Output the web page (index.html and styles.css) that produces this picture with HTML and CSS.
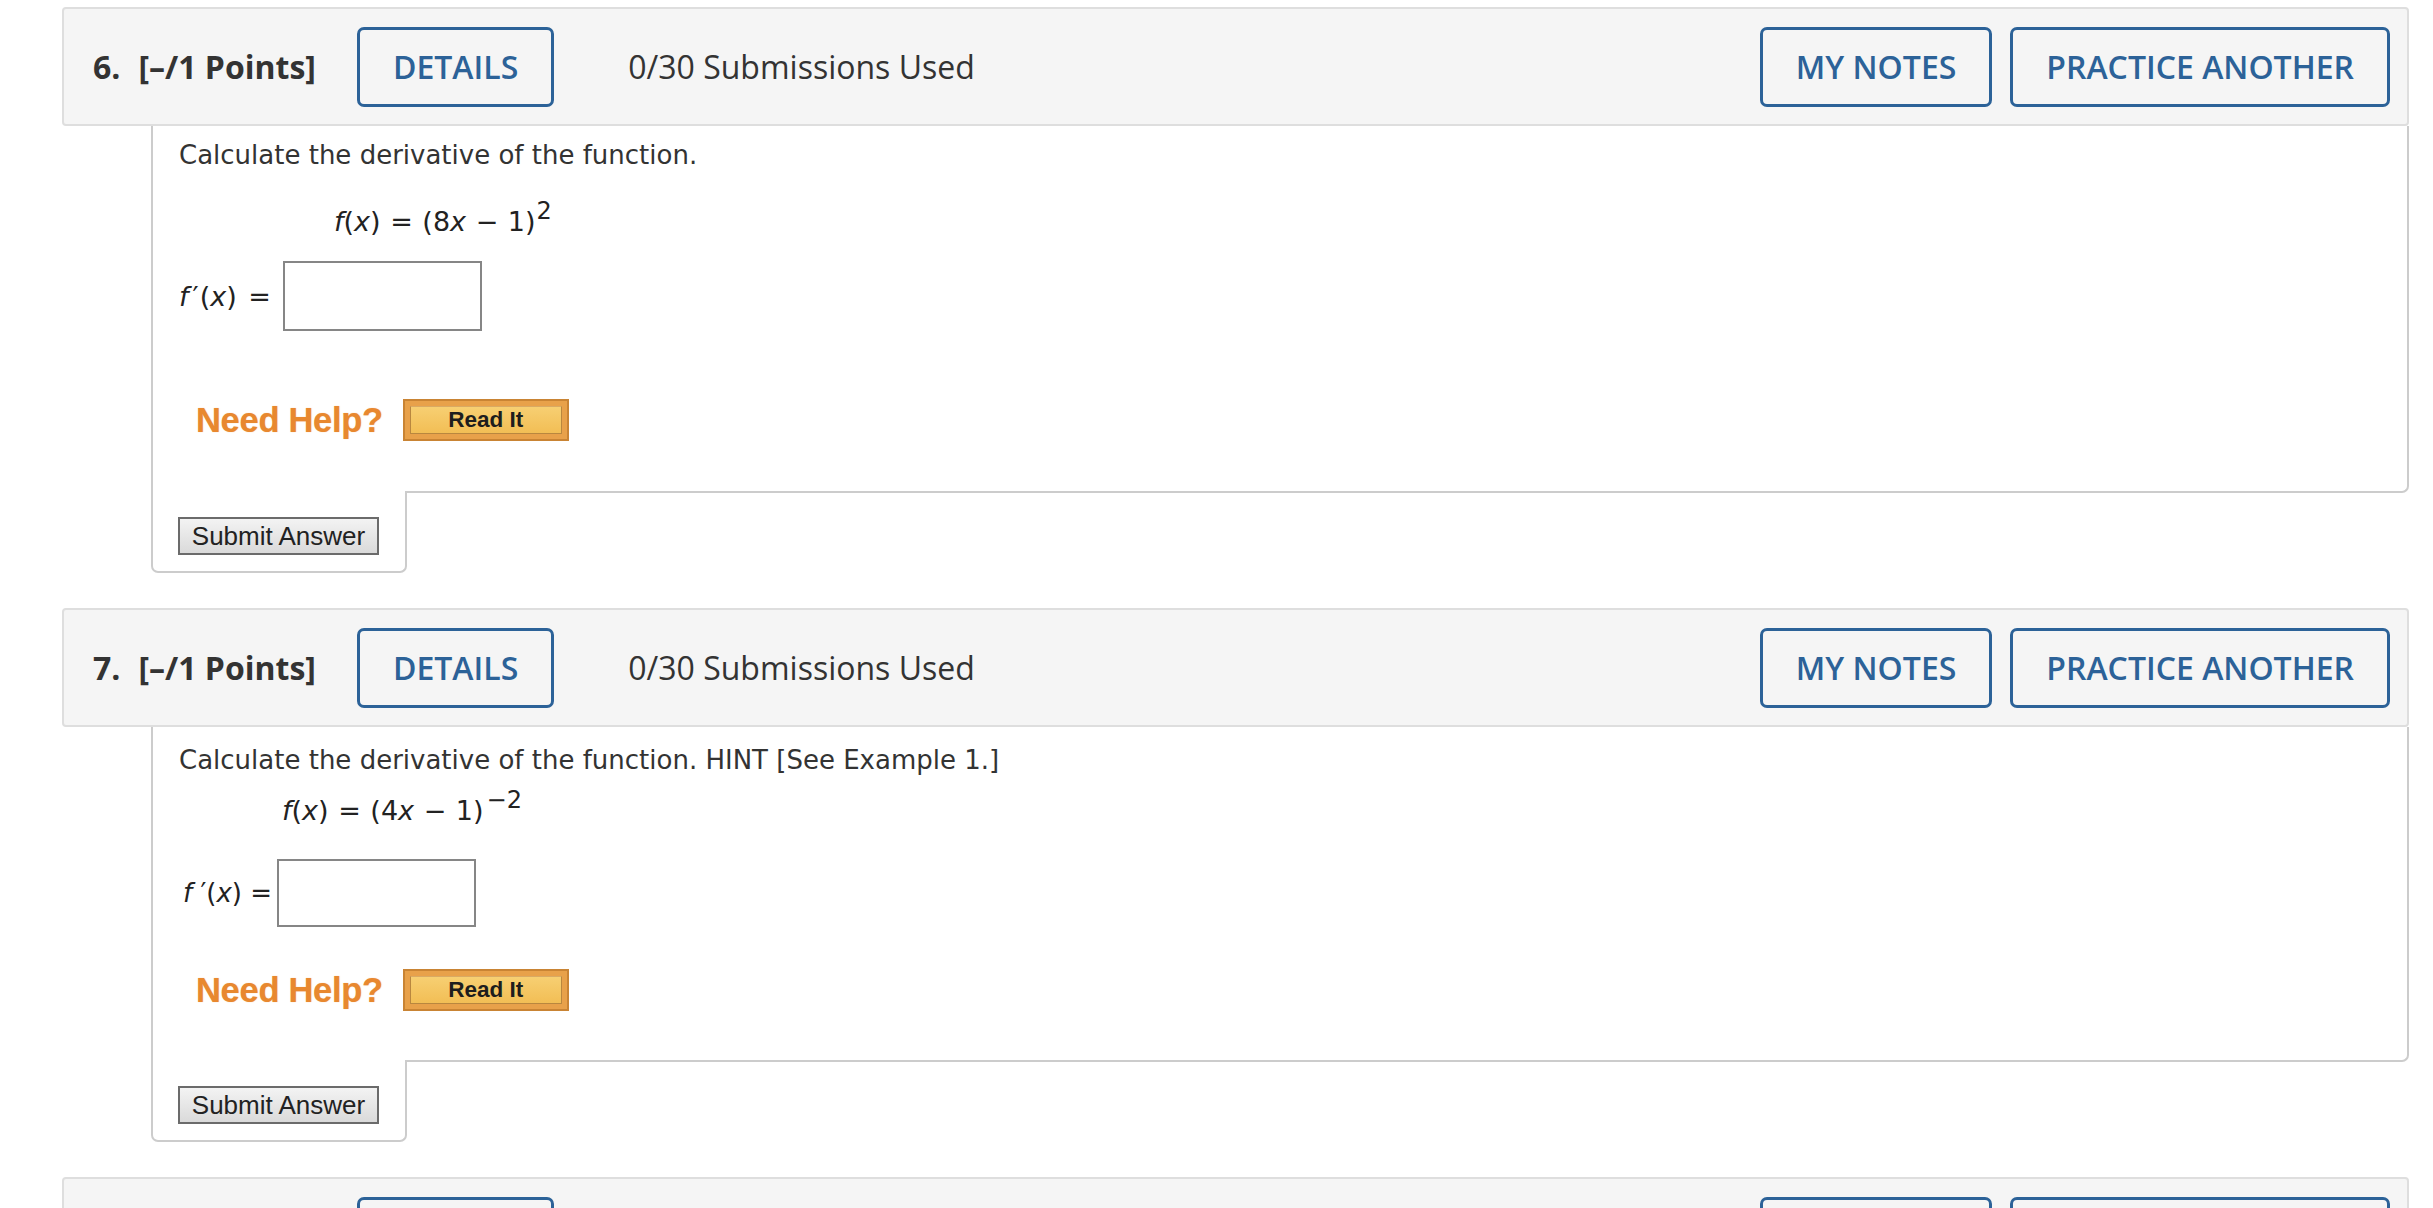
FILE: index.html
```html
<!DOCTYPE html>
<html lang="en">
<head>
<meta charset="utf-8">
<title>Questions</title>
<link rel="stylesheet" href="styles.css">
</head>
<body>
<div class="page">

  <section class="question">
    <div class="q-head">
      <span class="q-num"><span class="q-n">6.</span>[–/1 Points]</span>
      <span class="hbtn hbtn-details">DETAILS</span>
      <span class="q-subs">0/30 Submissions Used</span>
      <span class="q-spacer"></span>
      <span class="hbtn">MY NOTES</span>
      <span class="hbtn hbtn-practice">PRACTICE ANOTHER</span>
    </div>
    <div class="q-body">
      <div class="q-content q6">
        <p class="q-text">Calculate the derivative of the function.</p>
        <div class="q-formula"><i>f</i>(<i>x</i>) = (8<i>x</i> − 1)<span class="sup">2</span></div>
        <div class="q-answer"><span class="q-label"><i>f</i><span class="prime">′</span>(<i>x</i>) =</span><span class="q-input"></span></div>
        <div class="q-help"><span class="need-help">Need Help?</span><span class="read-it"><span class="read-it-in">Read It</span></span></div>
      </div>
      <div class="q-submit"><span class="submit-btn">Submit Answer</span></div>
    </div>
  </section>

  <section class="question">
    <div class="q-head">
      <span class="q-num"><span class="q-n">7.</span>[–/1 Points]</span>
      <span class="hbtn hbtn-details">DETAILS</span>
      <span class="q-subs">0/30 Submissions Used</span>
      <span class="q-spacer"></span>
      <span class="hbtn">MY NOTES</span>
      <span class="hbtn hbtn-practice">PRACTICE ANOTHER</span>
    </div>
    <div class="q-body">
      <div class="q-content q7">
        <p class="q-text">Calculate the derivative of the function. HINT [See Example 1.]</p>
        <div class="q-formula"><i>f</i>(<i>x</i>) = (4<i>x</i> − 1)<span class="sup sup-neg">−2</span></div>
        <div class="q-answer"><span class="q-label"><i>f</i> ′(<i>x</i>) =</span><span class="q-input"></span></div>
        <div class="q-help"><span class="need-help">Need Help?</span><span class="read-it"><span class="read-it-in">Read It</span></span></div>
      </div>
      <div class="q-submit"><span class="submit-btn">Submit Answer</span></div>
    </div>
  </section>

  <section class="question">
    <div class="q-head">
      <span class="q-num"><span class="q-n">8.</span>[–/1 Points]</span>
      <span class="hbtn hbtn-details">DETAILS</span>
      <span class="q-subs">0/30 Submissions Used</span>
      <span class="q-spacer"></span>
      <span class="hbtn">MY NOTES</span>
      <span class="hbtn hbtn-practice">PRACTICE ANOTHER</span>
    </div>
  </section>

</div>
</body>
</html>
```

FILE: styles.css
```css
html, body {
  margin: 0;
  padding: 0;
  background: #ffffff;
  overflow: hidden;
}

.page {
  padding: 7px 24px 0 62px;
  font-family: "DejaVu Sans", Verdana, sans-serif;
  color: #333333;
}

.question {
  margin-bottom: 35px;
}

/* ---------- header bar ---------- */
.q-head {
  box-sizing: border-box;
  height: 119px;
  display: flex;
  align-items: center;
  background: #f5f5f5;
  border: 2px solid #dedede;
  border-radius: 4px;
  padding: 0 17px 0 29px;
  font-family: "Open Sans", "Noto Sans", sans-serif;
  font-size: 32px;
  color: #333333;
}

.q-num {
  font-weight: 700;
  white-space: nowrap;
}

.q-n {
  margin-right: 18px;
}

.hbtn {
  box-sizing: border-box;
  height: 80px;
  display: flex;
  align-items: center;
  padding: 0 33px;
  border: 3px solid #2c6298;
  border-radius: 7px;
  color: #2c6298;
  font-weight: 600;
  white-space: nowrap;
}

.hbtn-details {
  margin-left: 41px;
}

.hbtn-practice {
  margin-left: 18px;
}

.q-subs {
  margin-left: 74px;
  white-space: nowrap;
}

.q-spacer {
  flex: 1;
}

/* ---------- question body ---------- */
.q-body {
  margin-left: 89px;
}

.q-content {
  border: 2px solid #cccccc;
  border-top: none;
  border-bottom-right-radius: 7px;
  padding-left: 26px;
  font-size: 26px;
  color: #333333;
}

.q-text {
  margin: 0;
  line-height: 30px;
}

.q-formula {
  line-height: 30px;
  height: 30px;
  font-size: 27px;
  word-spacing: 1px;
  color: #222222;
  white-space: nowrap;
}

.sup {
  font-size: 24px;
  line-height: 0;
  vertical-align: 12px;
  margin-left: 1px;
}

.sup-neg {
  margin-left: 3px;
}

.q-answer {
  display: flex;
  align-items: center;
  color: #222222;
}

.q-label {
  white-space: nowrap;
}

.prime {
  margin: 0 1px 0 4px;
}

.q-input {
  box-sizing: border-box;
  display: block;
  width: 199px;
  height: 70px;
  border: 2px solid #868686;
  background: #ffffff;
}

.q-help {
  display: flex;
  align-items: center;
  height: 42px;
  padding-left: 17px;
}

.need-help {
  font-family: "Liberation Sans", Arial, sans-serif;
  font-weight: 700;
  font-size: 34.5px;
  color: #e8882f;
  text-shadow: 0 0 1px rgba(232, 136, 47, 0.6);
  letter-spacing: -0.3px;
}

.read-it {
  box-sizing: border-box;
  margin-left: 20px;
  width: 166px;
  height: 42px;
  padding: 5px 5px;
  background: #e8a14a;
  border: 2px solid #c98434;
  display: flex;
}

.read-it-in {
  flex: 1;
  display: flex;
  align-items: center;
  justify-content: center;
  background: linear-gradient(#f7cf72, #f2be55);
  border: 1px solid #b9873f;
  border-top-color: #d9a963;
  font-family: "Liberation Sans", Arial, sans-serif;
  font-weight: 700;
  font-size: 22.5px;
  color: #1d1d1d;
}

/* spacing per question */
.q6 { padding-top: 14px; padding-bottom: 50px; }
.q6 .q-formula { margin-top: 37px; margin-left: 155px; }
.q6 .q-answer { margin-top: 24px; }
.q6 .q-label { margin-left: 0; margin-right: 12px; font-size: 27px; word-spacing: 3px; }
.q6 .q-input { height: 70px; }
.q6 .q-help { margin-top: 68px; }

.q7 { padding-top: 18px; padding-bottom: 49px; }
.q7 .q-formula { margin-top: 21px; margin-left: 103px; }
.q7 .q-answer { margin-top: 33px; }
.q7 .q-label { margin-left: 4px; margin-right: 5px; }
.q7 .q-input { height: 68px; }
.q7 .q-help { margin-top: 42px; }

/* submit tab */
.q-submit {
  position: relative;
  box-sizing: border-box;
  width: 256px;
  margin-top: -2px;
  padding: 26px 0 16px 25px;
  background: #ffffff;
  border: 2px solid #cccccc;
  border-top: none;
  border-radius: 0 0 7px 7px;
}

.submit-btn {
  box-sizing: border-box;
  display: flex;
  align-items: center;
  justify-content: center;
  width: 201px;
  height: 38px;
  border: 2px solid #6b6b6b;
  background: linear-gradient(#f3f3f3, #dadada);
  font-family: "Liberation Sans", Arial, sans-serif;
  font-size: 26px;
  color: #222222;
  white-space: nowrap;
}
```
